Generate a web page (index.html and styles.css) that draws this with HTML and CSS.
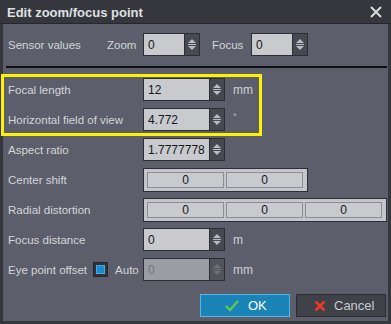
FILE: index.html
```html
<!DOCTYPE html>
<html>
<head>
<meta charset="utf-8">
<link rel="stylesheet" href="styles.css">
</head>
<body>
<div class="dialog">
  <div class="titlebar">
    <span class="title">Edit zoom/focus point</span>
    <svg class="close" width="12" height="12" viewBox="0 0 12 12"><path d="M1 1L11 11M11 1L1 11" stroke="#dcdcdc" stroke-width="2"/></svg>
  </div>
  <div class="content">
    <div class="sensor-row">
      <span class="label sensor-label">Sensor values</span>
      <span class="label zoom-label">Zoom</span>
      <div class="spin small"><div class="field">0</div><div class="spinbtn"><svg width="10" height="13" viewBox="0 0 10 13"><path d="M1 5L5 1L9 5Z M1 8L9 8L5 12Z" fill="#b9bcc2"/><rect x="1" y="6" width="8" height="1" fill="#b9bcc2"/></svg></div></div>
      <span class="label focus-label">Focus</span>
      <div class="spin small"><div class="field">0</div><div class="spinbtn"><svg width="10" height="13" viewBox="0 0 10 13"><path d="M1 5L5 1L9 5Z M1 8L9 8L5 12Z" fill="#b9bcc2"/><rect x="1" y="6" width="8" height="1" fill="#b9bcc2"/></svg></div></div>
    </div>
    <div class="separator"></div>
    <div class="highlight">
      <div class="row">
        <span class="label">Focal length</span>
        <div class="spin"><div class="field">12</div><div class="spinbtn"><svg width="10" height="13" viewBox="0 0 10 13"><path d="M1 5L5 1L9 5Z M1 8L9 8L5 12Z" fill="#b9bcc2"/><rect x="1" y="6" width="8" height="1" fill="#b9bcc2"/></svg></div></div>
        <span class="unit">mm</span>
      </div>
      <div class="row">
        <span class="label">Horizontal field of view</span>
        <div class="spin"><div class="field">4.772</div><div class="spinbtn"><svg width="10" height="13" viewBox="0 0 10 13"><path d="M1 5L5 1L9 5Z M1 8L9 8L5 12Z" fill="#b9bcc2"/><rect x="1" y="6" width="8" height="1" fill="#b9bcc2"/></svg></div></div>
        <span class="unit deg">°</span>
      </div>
    </div>
    <div class="row">
      <span class="label">Aspect ratio</span>
      <div class="spin"><div class="field">1.7777778</div><div class="spinbtn"><svg width="10" height="13" viewBox="0 0 10 13"><path d="M1 5L5 1L9 5Z M1 8L9 8L5 12Z" fill="#b9bcc2"/><rect x="1" y="6" width="8" height="1" fill="#b9bcc2"/></svg></div></div>
    </div>
    <div class="row">
      <span class="label">Center shift</span>
      <div class="multi two"><div class="cell">0</div><div class="cell">0</div></div>
    </div>
    <div class="row">
      <span class="label">Radial distortion</span>
      <div class="multi three"><div class="cell">0</div><div class="cell">0</div><div class="cell">0</div></div>
    </div>
    <div class="row">
      <span class="label">Focus distance</span>
      <div class="spin"><div class="field">0</div><div class="spinbtn"><svg width="10" height="13" viewBox="0 0 10 13"><path d="M1 5L5 1L9 5Z M1 8L9 8L5 12Z" fill="#b9bcc2"/><rect x="1" y="6" width="8" height="1" fill="#b9bcc2"/></svg></div></div>
      <span class="unit">m</span>
    </div>
    <div class="row">
      <div class="eye-label">
        <span class="label">Eye point offset</span>
        <span class="checkbox"><span class="check-fill"></span></span>
        <span class="label auto">Auto</span>
      </div>
      <div class="spin disabled"><div class="field">0</div><div class="spinbtn"><svg width="10" height="13" viewBox="0 0 10 13"><path d="M1 5L5 1L9 5Z M1 8L9 8L5 12Z" fill="#6e7178"/><rect x="1" y="6" width="8" height="1" fill="#6e7178"/></svg></div></div>
      <span class="unit">mm</span>
    </div>
    <div class="buttons">
      <div class="btn ok">
        <svg width="14" height="12" viewBox="0 0 14 12"><path d="M1 6L5 10L13 1" fill="none" stroke="#5fc84a" stroke-width="2.4"/></svg>
        <span>OK</span>
      </div>
      <div class="btn cancel">
        <svg width="12" height="12" viewBox="0 0 12 12"><path d="M1.5 1.5L10.5 10.5M10.5 1.5L1.5 10.5" stroke="#e8382a" stroke-width="2.6"/></svg>
        <span>Cancel</span>
      </div>
    </div>
  </div>
</div>
</body>
</html>
```

FILE: styles.css
```css
html, body {
  margin: 0;
  padding: 0;
  background: #35373d;
}
body {
  font-family: "Liberation Sans", Arial, sans-serif;
  font-size: 11.5px;
}
.dialog {
  width: 391px;
  height: 324px;
  box-sizing: border-box;
  background: #35373d;
  display: flex;
  flex-direction: column;
}
.titlebar {
  height: 23px;
  display: flex;
  align-items: center;
  justify-content: space-between;
  padding: 0 9px 0 7px;
  border-bottom: 1px solid #25272b;
}
.title {
  color: #dfe0e3;
  font-weight: bold;
  font-size: 13px;
  margin-top: 1px;
}
.close {
  display: block;
}
.content {
  margin: 0 3px 3px 3px;
  flex: 1;
  background: #5c5f6b;
  padding-top: 9px;
  box-sizing: border-box;
}
.label {
  color: #d3d5da;
  white-space: nowrap;
}
.sensor-row {
  display: flex;
  align-items: center;
  height: 23px;
  padding-left: 5px;
}
.sensor-label { width: 99px; }
.zoom-label { width: 36px; }
.focus-label { width: 39px; margin-left: 12px; }
.spin {
  display: flex;
  height: 23px;
  width: 82px;
  box-sizing: border-box;
  border: 1px solid #2c2e33;
}
.spin.small { width: 57px; }
.field {
  flex: 1;
  background: #c9cace;
  color: #14161c;
  font-size: 12px;
  padding-left: 4px;
  display: flex;
  align-items: center;
}
.spinbtn {
  width: 14px;
  background: #464951;
  border-left: 1px solid #2c2e33;
  display: flex;
  align-items: center;
  justify-content: center;
}
.spin.disabled .field {
  background: #9b9da4;
  color: #74767c;
}
.spin.disabled .spinbtn {
  background: #51545c;
}
.separator {
  height: 2px;
  background: #0e0f11;
  margin: 10px 1px 0 3px;
}
.highlight {
  position: relative;
  margin-top: 10px;
}
.highlight::after {
  content: "";
  position: absolute;
  left: -2px;
  top: -4px;
  width: 261px;
  height: 62px;
  box-sizing: border-box;
  border: 3px solid #fff200;
  pointer-events: none;
}
.row {
  display: grid;
  grid-template-columns: 135px max-content max-content;
  justify-content: start;
  align-items: start;
  height: 30px;
  padding-left: 5px;
}
.row > .label, .eye-label {
  height: 23px;
  display: flex;
  align-items: center;
}
.unit {
  color: #cfd1d6;
  height: 23px;
  display: flex;
  align-items: center;
  margin-left: 8px;
  font-size: 12px;
}
.unit.deg {
  align-items: flex-start;
  padding-top: 4px;
  box-sizing: border-box;
  font-size: 9px;
}
.multi {
  display: flex;
  gap: 2px;
  height: 24px;
  box-sizing: border-box;
  border: 1px solid #2c2e33;
  background: #c5c6cb;
  padding: 3px 4px 3px 3px;
}
.multi.two { width: 165px; }
.multi.three { width: 244px; }
.cell {
  flex: 1;
  border: 1px solid #8c8e94;
  background: #c9cace;
  color: #14161c;
  font-size: 12px;
  display: flex;
  align-items: center;
  justify-content: center;
}
.checkbox {
  margin-left: 6px;
  width: 15px;
  height: 15px;
  box-sizing: border-box;
  background: #2f3238;
  border: 1px solid #26282c;
  display: flex;
  align-items: center;
  justify-content: center;
}
.check-fill {
  width: 9px;
  height: 9px;
  box-sizing: border-box;
  background: #1b8bcc;
  border: 1px solid #4aa9de;
}
.auto {
  margin-left: 7px;
}
.buttons {
  display: flex;
  justify-content: flex-end;
  gap: 6px;
  margin-top: 6px;
  padding-right: 2px;
}
.btn {
  width: 90px;
  height: 23px;
  box-sizing: border-box;
  display: flex;
  align-items: center;
  font-size: 13px;
}
.btn.ok {
  background: #1a84b9;
  border: 1px solid #55b6e6;
  color: #ffffff;
  padding-left: 24px;
  gap: 9px;
}
.btn.cancel {
  background: #3f4249;
  border: 1px solid #2a2c30;
  color: #c9cbd0;
  padding-left: 17px;
  gap: 8px;
}
```
